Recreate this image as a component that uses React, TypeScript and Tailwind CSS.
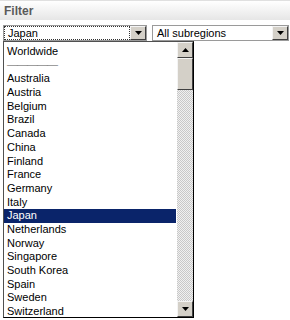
import React from 'react';

const countries = [
  'Australia', 'Austria', 'Belgium', 'Brazil', 'Canada', 'China', 'Finland', 'France',
  'Germany', 'Italy', 'Japan', 'Netherlands', 'Norway', 'Singapore', 'South Korea',
  'Spain', 'Sweden', 'Switzerland',
];

function Arrow({ up = false }: { up?: boolean }) {
  return (
    <svg width="7" height="4" viewBox="0 0 7 4" className={up ? 'rotate-180' : ''}>
      <path d="M0 0h7L3.5 4z" fill="#000" />
    </svg>
  );
}

function DropButton() {
  return (
    <div className="w-[16px] h-[14px] flex items-center justify-center bg-[#d4d0c8] border border-t-[#f4f4f4] border-l-[#f4f4f4] border-r-[#404040] border-b-[#404040] shrink-0">
      <Arrow />
    </div>
  );
}

export default function App() {
  return (
    <div className="w-[290px] h-[320px] bg-white overflow-hidden relative" style={{ fontFamily: '"Liberation Sans", Arial, sans-serif' }}>
      <div className="h-[20px] border-t border-[#e0e0e0] bg-gradient-to-b from-white to-[#e6e6e6] flex items-center pl-[4px] pt-[1px]">
        <span className="text-[12px] font-bold text-[#5a5a5a]">Filter</span>
      </div>
      <div className="flex gap-[5px] pl-[3px] pr-[1px] mt-[5px]">
        <div className="w-[144px] h-[16px] border border-[#9a9a9a] flex items-center">
          <div className="flex-1 h-[14px] border border-dotted border-[#333] flex items-center pl-[3px] text-[11px] text-black leading-none">Japan</div>
          <DropButton />
        </div>
        <div className="flex-1 h-[16px] border border-[#9a9a9a] flex items-center">
          <div className="flex-1 pl-[4px] text-[11px] text-black leading-none">All subregions</div>
          <DropButton />
        </div>
      </div>
      <div className="absolute left-[3px] top-[41px] w-[191px] h-[277px] border border-[#505050] border-r-[#000] border-b-[#000] bg-white flex">
        <div className="flex-1 pt-[3px] text-[11px] text-black">
          <div className="h-[13.7px] leading-[13.7px] pl-[3px]">Worldwide</div>
          <div className="h-[13.7px] leading-[10px] pl-[3px] text-[#888] tracking-[-1px]">—————</div>
          {countries.map((c) => (
            <div
              key={c}
              className={`h-[13.7px] leading-[13.7px] pl-[3px] mr-[1px] ${c === 'Japan' ? 'bg-[#0a246a] text-white' : ''}`}
            >
              {c}
            </div>
          ))}
        </div>
        <div className="w-[16px] flex flex-col bg-[repeating-conic-gradient(#c8c8c8_0%_25%,#f0f0f0_0%_50%)] bg-[length:2px_2px]">
          <div className="h-[16px] flex items-center justify-center bg-[#d4d0c8] border border-t-[#f4f4f4] border-l-[#f4f4f4] border-r-[#404040] border-b-[#404040]">
            <Arrow up />
          </div>
          <div className="h-[32px] bg-[#d4d0c8] border border-t-[#f4f4f4] border-l-[#f4f4f4] border-r-[#404040] border-b-[#404040]" />
          <div className="flex-1" />
          <div className="h-[16px] flex items-center justify-center bg-[#d4d0c8] border border-t-[#f4f4f4] border-l-[#f4f4f4] border-r-[#404040] border-b-[#404040]">
            <Arrow />
          </div>
        </div>
      </div>
    </div>
  );
}
